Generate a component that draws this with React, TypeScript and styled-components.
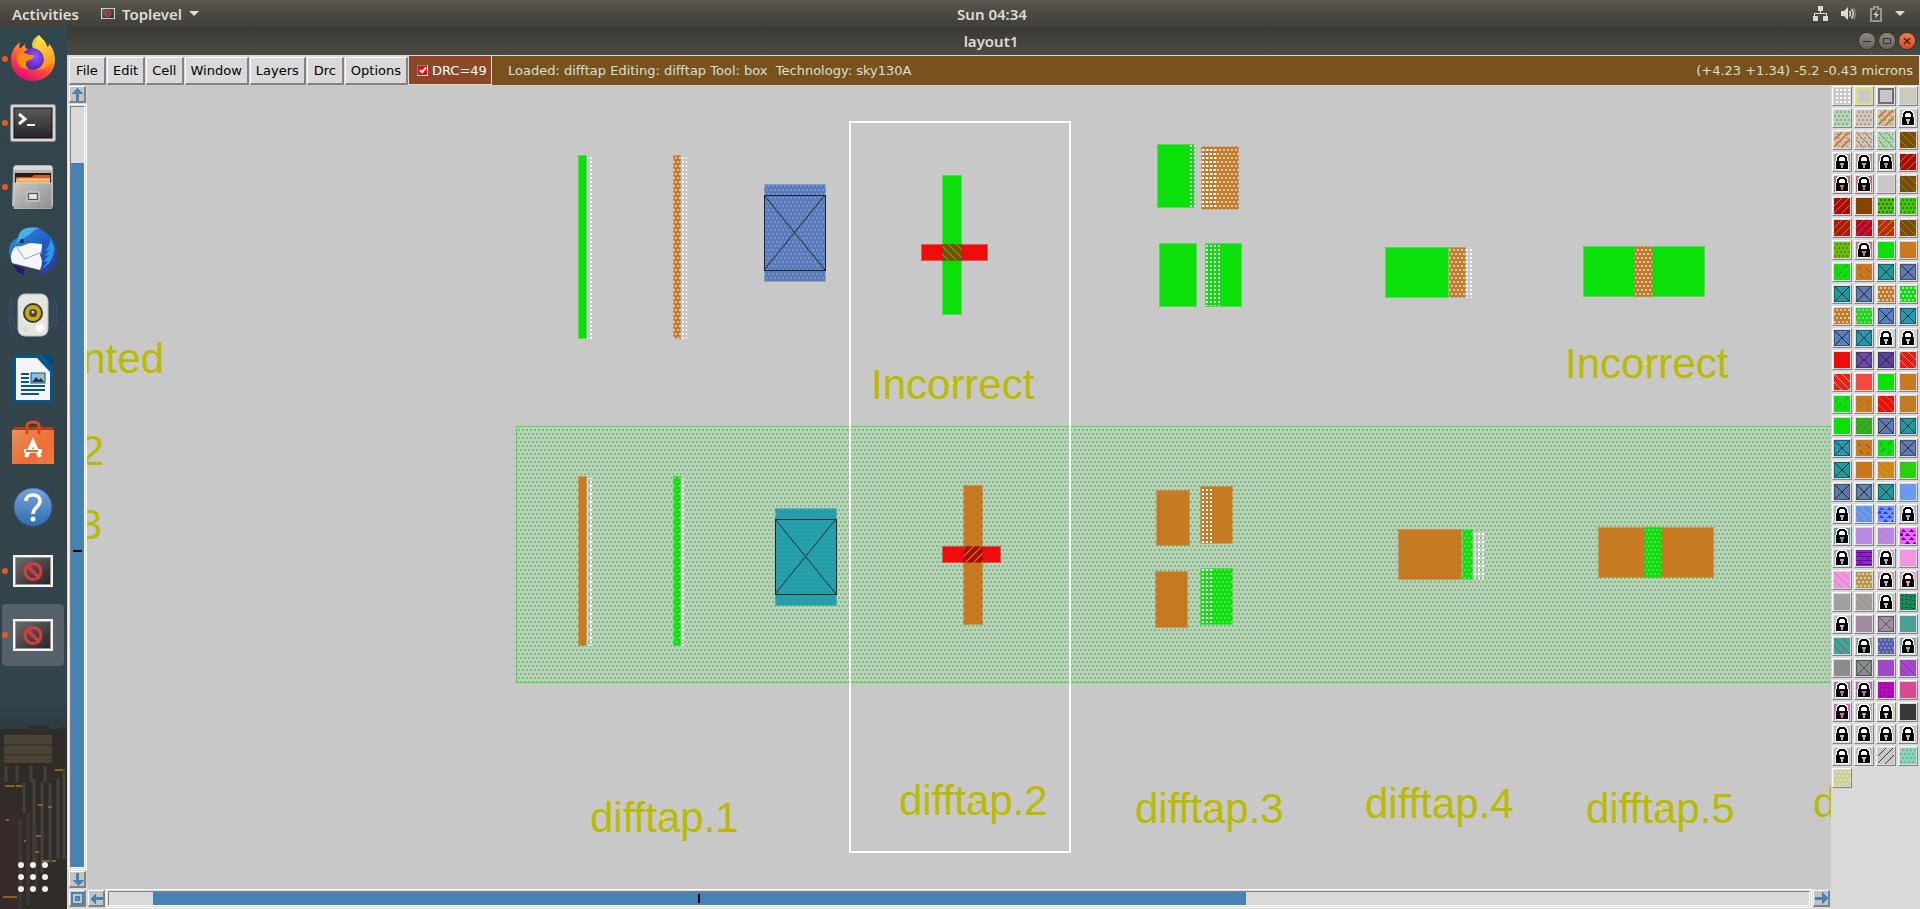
import React from "react";
import styled, { createGlobalStyle, css } from "styled-components";

const Global = createGlobalStyle`
  *, *::before, *::after { box-sizing: border-box; }
  body { margin: 0; background: #d9d9d9; }
  button { margin: 0; padding: 0; border: 0; background: none; font: inherit; color: inherit; cursor: default; }
`;

const raised = css`
  border: 1px solid;
  border-color: #fff #828282 #828282 #fff;
`;

const Desktop = styled.div`
  display: grid;
  grid-template: 27px minmax(0, 1fr) / 67px minmax(0, 1fr);
  height: 100vh;
  overflow: hidden;
  font-family: "DejaVu Sans", sans-serif;
  font-size: 13px;
`;

/* ---------- desktop bar ---------- */

const TopBar = styled.header`
  grid-column: 1 / -1;
  display: grid;
  grid-template-columns: 1fr auto 1fr;
  align-items: center;
  background: linear-gradient(#59564d, #3f3e39);
  color: #dfdbd2;
  font-family: "Noto Sans", sans-serif;
  font-size: 15px;
  line-height: 18px;
  font-weight: 600;
  padding: 0 15px 0 12px;
`;

const BarGroup = styled.div<{ $end?: boolean; $gap: number }>`
  display: flex;
  align-items: center;
  gap: ${(p) => p.$gap}px;
  justify-content: ${(p) => (p.$end ? "flex-end" : "flex-start")};
`;

const BarButton = styled.button`
  display: flex;
  align-items: center;
  gap: 7px;
`;

const Clock = styled.time`
  margin-left: 67px;
`;

/* ---------- dock ---------- */

const Dock = styled.nav`
  position: relative;
  display: flex;
  flex-direction: column;
  gap: 2px;
  padding: 1px 3px 1px 2px;
  overflow: hidden;
  background: linear-gradient(#32464f, #33434a 50%, #32444c 76%, #2c3a42 80%, #2f2e2b 83%, #2f2c29);
`;

const City = styled.svg`
  position: absolute;
  left: 0;
  bottom: 0;
`;

const DockItem = styled.button<{ $active?: boolean; $last?: boolean }>`
  position: relative;
  display: flex;
  align-items: center;
  justify-content: center;
  flex: 0 0 62px;
  border-radius: 4px;
  background: ${(p) => (p.$active ? "#566169" : "transparent")};
  margin-top: ${(p) => (p.$last ? "auto" : 0)};
`;

const RunningDot = styled.span`
  position: absolute;
  left: 0;
  width: 6px;
  height: 6px;
  border-radius: 50%;
  background: #e95420;
`;

/* ---------- window ---------- */

const Window = styled.main`
  display: flex;
  flex-direction: column;
  min-height: 0;
  background: #d9d9d9;
`;

const TitleBar = styled.div`
  display: grid;
  grid-template-columns: 1fr auto 1fr;
  align-items: center;
  flex: 0 0 28px;
  padding-right: 5px;
  background: linear-gradient(#3a3934, #4b4a44);
  color: #dfdbd2;
`;

const Title = styled.h1`
  grid-column: 2;
  margin: 0;
  font: 600 15px/18px "Noto Sans", sans-serif;
`;

const WindowControls = styled.div`
  display: flex;
  justify-content: flex-end;
  gap: 4px;
`;

const WindowControl = styled.button<{ $close?: boolean }>`
  display: flex;
  width: 16px;
  height: 16px;
  border-radius: 50%;
  background: ${(p) => (p.$close ? "linear-gradient(#f47b55, #df4a1c)" : "linear-gradient(#8b8880, #67655e)")};
  box-shadow: 0 0 0 1px #35342f;
`;

const MenuRow = styled.div`
  display: flex;
  flex: 0 0 30px;
  padding: 1px 1px 0;
`;

const MenuBar = styled.nav`
  display: flex;
  gap: 1px;
  padding: 1px 1px 0;
`;

const MenuButton = styled.button`
  ${raised}
  border-right-width: 2px;
  border-bottom-width: 2px;
  min-width: 37px;
  padding: 0 5px;
  line-height: 24px;
  color: #000;
`;

const DrcToggle = styled.label`
  display: flex;
  align-items: center;
  gap: 4px;
  width: 82px;
  margin: 0 1px 1px 0;
  padding: 0 2px 0 8px;
  background: #8b4726;
  color: #fff;
  white-space: nowrap;
`;

const Tick = styled.input`
  appearance: none;
  flex: 0 0 11px;
  height: 11px;
  margin: 0;
  border: 1px solid;
  border-color: #828282 #fff #fff #828282;
  background: #f00;
  position: relative;
  &:checked::after {
    content: "";
    position: absolute;
    left: 3px;
    top: 0;
    width: 4px;
    height: 7px;
    border: solid #fff;
    border-width: 0 2px 2px 0;
    transform: rotate(40deg);
  }
`;

const StatusBar = styled.div`
  display: flex;
  flex: 1;
  align-items: center;
  justify-content: space-between;
  padding: 0 6px 0 16px;
  background: #79511d;
  color: #cfe2d6;
  white-space: pre;
`;

const Body = styled.div`
  display: grid;
  flex: 1;
  min-height: 0;
  grid-template: minmax(0, 1fr) 20px / 20px minmax(0, 1fr) 89px;
`;

const Canvas = styled.svg`
  width: 100%;
  height: 100%;
  background: #c8c8c8;
`;

const ScrollColumn = styled.div`
  display: flex;
  flex-direction: column;
  gap: 1px;
  padding: 1px 0 1px 1px;
`;

const ScrollRow = styled.div`
  grid-row: 2;
  grid-column: 1 / 3;
  display: flex;
  align-items: flex-start;
  gap: 1px;
  padding: 0 1px 0 2px;
`;

const ScrollButton = styled.button`
  ${raised}
  border-bottom-width: 2px;
  border-right-width: 2px;
  flex: none;
  width: 17px;
  height: 17px;
  background: #c3c3c3;
  display: flex;
  align-items: center;
  justify-content: center;
`;

const ColumnButton = styled(ScrollButton)`
  margin-left: 1px;
`;

const RowButton = styled(ScrollButton)`
  margin-top: 1px;
`;

const CornerButton = styled(RowButton)`
  margin-right: 1px;
`;

const Trough = styled.div<{ $vertical?: boolean }>`
  flex: 1;
  display: flex;
  padding: 1px;
  border: 1px solid #fff;
  min-width: 0;
  ${(p) => (p.$vertical ? "width: 19px;" : "height: 19px;")}
`;

const Track = styled.div<{ $vertical?: boolean; $split: string }>`
  flex: 1;
  display: grid;
  border: 1px solid;
  border-color: #828282 #fff #fff #828282;
  ${(p) => (p.$vertical ? `grid-template-rows: ${p.$split};` : `grid-template-columns: ${p.$split};`)}
`;

/* The black notch marks the middle of the cell inside the visible range. */
const Thumb = styled.div<{ $vertical?: boolean }>`
  display: grid;
  justify-items: center;
  align-items: center;
  background: #4682b4;
  ${(p) => (p.$vertical ? "grid-row: 2; grid-template-rows: 388fr 2px 316fr;" : "grid-column: 2;")}
  &::after {
    content: "";
    background: #000;
    ${(p) => (p.$vertical ? "grid-row: 2; width: 9px; height: 2px;" : "width: 2px; height: 9px;")}
  }
`;

const Palette = styled.aside`
  grid-row: 1 / 3;
  grid-column: 3;
  display: grid;
  grid-template-columns: repeat(4, 20px);
  grid-auto-rows: 20px;
  gap: 2px;
  padding: 1px;
  align-content: start;
`;

const LayerButton = styled.button`
  ${raised}
  padding: 1px;
  display: flex;
`;

/* ---------- layer palette data ---------- */

type Kind =
  | "solid" | "dots" | "stag" | "frame" | "back" | "fwd" | "backSparse" | "fwdSparse"
  | "dotsFwd" | "dotsBack" | "x" | "xDots" | "lock" | "tri" | "stripes" | "weave";
type Layer = [Kind, string, string?, string?];

const G = "#0be00b";
const O = "#c67a22";
const B = "#c8c8c8";
const T = "#219a9c";
const S = "#6279ae";

const layers: Layer[] = [
  ["dots", B, "#fff"], ["frame", B, "#dcdc70"], ["frame", B, "#707070"], ["back", B, "#dcdc60"],
  ["stag", B, "#4edc4e"], ["stag", B, "#c89a68"], ["dotsFwd", B, "#cf8232", "#c8a07a"], ["lock", "#c8c8b8"],
  ["dotsFwd", B, "#cf8232", "#c8a07a"], ["dotsBack", B, "#b0764c", "#c89a68"], ["dotsBack", B, G, "#8cc88c"], ["back", "#8b430c", "#10c810"],
  ["lock", "#b5a189"], ["lock", "#b5a189"], ["lock", "#a99680"], ["fwd", "#a50d0d", "#d87020"],
  ["lock", "#c26f78"], ["lock", "#c26f78"], ["solid", B], ["back", "#8b430c", "#10c810"],
  ["fwd", "#a50d0d", "#d87020"], ["solid", "#864300"], ["stag", G, "#f01010"], ["stag", G, "#d83010"],
  ["fwd", "#a81a0c", "#d8701c"], ["fwd", "#b00a26", "#e03c3c"], ["fwd", "#b5300a", "#f0901c"], ["back", "#8b430c", "#30b810"],
  ["stag", "#38d80c", "#f04010"], ["lock", "#b58077"], ["solid", G], ["solid", O],
  ["fwdSparse", G, "#306010"], ["backSparse", O, "#904810"], ["x", T], ["x", S],
  ["x", T], ["x", S], ["stag", O, B], ["stag", G, B],
  ["stag", O, B], ["stag", G, "#c8a8b8"], ["xDots", S, "#4f8df0"], ["xDots", T, "#3990e0"],
  ["xDots", S, "#4f8df0"], ["xDots", T, "#3990e0"], ["lock", "#cfcfcf"], ["lock", "#cfcfcf"],
  ["solid", "#ee0d0d"], ["x", "#7248a6"], ["x", "#64409c"], ["back", "#f81410", "#f0a090"],
  ["back", "#ff1a10", "#f0c0b0"], ["solid", "#f24c40"], ["solid", G], ["solid", O],
  ["fwdSparse", G, "#408010"], ["backSparse", O, "#a85c18"], ["back", "#ee0d0d", "#d86820"], ["solid", O],
  ["solid", G], ["fwd", "#34a81c", "#40c020"], ["x", S], ["x", T],
  ["xDots", T, "#4f8df0"], ["backSparse", O, "#803c00"], ["fwdSparse", G, "#705800"], ["x", S],
  ["x", T], ["solid", "#c8761c"], ["back", "#d08a20", "#c07a10"], ["solid", "#2bd00c"],
  ["x", "#6279a6"], ["x", "#6280a6"], ["x", T], ["solid", "#6a9aee"],
  ["lock", "#a0b8e4"], ["back", "#6a9aee", "#5880c4"], ["tri", "#7890ff", "#1450ff"], ["lock", "#a0b8e4"],
  ["lock", "#5aa3b4"], ["solid", "#b98ae2"], ["back", "#b98ae2", "#c070c8"], ["tri", "#e868f0", "#8800b8"],
  ["lock", "#b8a2c8"], ["stripes", "#8a2cb8", "#6008a0"], ["lock", "#c2aed0"], ["solid", "#f096e2"],
  ["back", "#f096e2", "#d878b8"], ["stag", "#b09080", "#f0e010"], ["lock", "#e49cc8"], ["lock", "#f09cc8"],
  ["solid", "#a0a0a0"], ["back", "#a0a0a0", "#b08858"], ["lock", "#c0c0c0"], ["weave", "#208858", "#005c3c"],
  ["lock", "#c0c0c0"], ["solid", "#a28ca2"], ["x", "#a28ca2", "#6c586c"], ["solid", "#4a9f97"],
  ["back", "#4a9f97", "#388078"], ["lock", "#78b0ac"], ["stag", "#6c50b4", "#38b0a8"], ["lock", "#78b0ac"],
  ["solid", "#8c8c8c"], ["x", "#8c8c8c", "#505050"], ["solid", "#9e4ac8"], ["back", "#9e4ac8", "#a82898"],
  ["lock", "#b070b4"], ["lock", "#b070b4"], ["weave", "#b80cb8", "#8808a0"], ["solid", "#d84a90"],
  ["lock", "#e060cc"], ["lock", "#b8b8b8"], ["lock", "#d0d0b0"], ["solid", "#383838"],
  ["lock", "#c4c4c4"], ["lock", "#c8beb4"], ["lock", "#c8beb4"], ["lock", "#c8beb4"],
  ["lock", "#c8beb4"], ["lock", "#c8beb4"], ["fwd", B, "#404040"], ["stag", "#90d0b8", "#50c898"],
  ["stag", B, "#f0f020"],
];

const dotPath = (staggered: boolean) => {
  let d = "";
  for (let r = 0; r < 4; r++)
    for (let c = 0; c < 4; c++) d += `M${c * 4 + (staggered && r % 2 ? 0 : 2)} ${r * 4 + 1}h2v2h-2z`;
  return d;
};
const straightDots = dotPath(false);
const staggeredDots = dotPath(true);
const fwdLines = "M0 8L8 0M0 15L15 0M7 16L16 7";
const backLines = "M8 0L16 8M0 0L16 16M0 8L8 16";

function Swatch({ layer }: { layer: Layer }) {
  const [kind, bg, fg = "#123040", extra] = layer;
  const line = kind === "dotsFwd" ? 1.8 : 1.3;
  return (
    <svg width="16" height="16" viewBox="0 0 16 16" shapeRendering="crispEdges">
      <rect width="16" height="16" fill={bg} />
      {kind === "dots" && <path d={straightDots} fill={fg} />}
      {kind === "stag" && <path d={staggeredDots} fill={fg} />}
      {kind === "frame" && <rect x="1" y="1" width="14" height="14" fill="none" stroke={fg} strokeWidth="1.500" />}
      {(kind === "dotsFwd" || kind === "dotsBack") && <path d={staggeredDots} fill={extra} />}
      {(kind === "fwd" || kind === "dotsFwd") && <path d={fwdLines} stroke={fg} strokeWidth={line} />}
      {(kind === "back" || kind === "dotsBack") && <path d={backLines} stroke={fg} strokeWidth={line} />}
      {kind === "fwdSparse" && <path d="M3 12l4-4M10 5l4-4M10 13l3-3M1 6l3-3" stroke={fg} />}
      {kind === "backSparse" && <path d="M2 3l3 3M10 4l4 4M3 10l4 4M11 12l2 2" stroke={fg} />}
      {kind === "xDots" && <path d={staggeredDots} fill={fg} />}
      {(kind === "x" || kind === "xDots") && (
        <>
          <rect x=".5" y=".5" width="15" height="15" fill="none" stroke="#123040" strokeOpacity=".5" />
          <path d="M1 1l14 14M15 1L1 15" stroke={kind === "x" ? fg : "#123040"} strokeWidth="1.2" />
        </>
      )}
      {kind === "tri" && (
        <path d="M0 4l3-3 3 3zM8 4l3-3 3 3zM4 8l3-3 3 3zM12 8l3-3 1 3zM0 12l3-3 3 3zM8 12l3-3 3 3zM4 16l3-3 3 3zM12 16l3-3 1 3zM0 5h3v3H0z" fill={fg} />
      )}
      {kind === "stripes" && <path d="M0 2h16v1H0zM0 6h16v1H0zM0 10h16v1H0zM0 14h16v1H0zM3 4h4v1H3zM10 8h4v1h-4zM3 12h4v1H3z" fill={fg} />}
      {kind === "weave" && (
        <path d="M1 1h3v1H1zM6 0h1v3H6zM9 2h3v1H9zM14 1h1v3h-1zM2 4h1v3H2zM5 5h3v1H5zM10 4h1v3h-1zM12 6h3v1h-3zM1 9h3v1H1zM6 8h1v3H6zM9 10h3v1H9zM14 9h1v3h-1zM2 12h1v3H2zM5 13h3v1H5zM10 12h1v3h-1zM12 14h3v1h-3z" fill={fg} />
      )}
      {kind === "lock" && (
        <>
          <path d="M4 0h8l2 3v4h1v9H1V7h1V3z" fill="#fff" />
          <path d="M5 1h6v1h1v1h1v4h1v8H2V7h1V3h1V2h1z" fill="#000" />
          <path d="M6 3h4v1h1v3H5V4h1z" fill="#fff" />
          <path d="M6 9h4v2H9v3H7v-3H6z" fill={bg} />
        </>
      )}
    </svg>
  );
}

/* ---------- chip layout ---------- */

interface BoxProps { x: number; y: number; w: number; h: number; fill: string }

/* A painted area with the softer one pixel rim that every layer has. */
const Box = ({ x, y, w, h, fill }: BoxProps) => (
  <>
    <rect x={x} y={y} width={w} height={h} fill={fill} opacity=".6" />
    <rect x={x + 1} y={y + 1} width={w - 2} height={h - 2} fill={fill} />
  </>
);

const WhiteDots = ({ x, y, w, h }: Omit<BoxProps, "fill">) => (
  <rect x={x} y={y} width={w} height={h} fill="url(#white)" />
);

const Contact = ({ x, y, fill }: { x: number; y: number; fill: string }) => (
  <>
    <Box x={x} y={y} w={62} h={98} fill={fill} />
    <path d={`M${x} ${y + 11}h61v75h-61z`} fill="none" stroke="#16262e" />
    <path d={`M${x} ${y + 11}l61 75m0 -75l-61 75`} fill="none" stroke="#16262e" shapeRendering="auto" />
  </>
);

const Stagger = ({ id, bg, dot, x = 0, y = 0 }: { id: string; bg?: string; dot: string; x?: number; y?: number }) => (
  <pattern id={id} x={x} y={y} width="4" height="8" patternUnits="userSpaceOnUse">
    {bg && <rect width="4" height="8" fill={bg} />}
    <path d="M0 0h2v2H0zM2 4h2v2H2z" fill={dot} />
  </pattern>
);

const Label = styled.text`
  font: 42px "Liberation Sans", sans-serif;
  font-variant-ligatures: none;
  fill: #baba00;
`;

const labels: [string, number, number, boolean?][] = [
  ["Incorrect", 871, 399], ["Incorrect", 1565, 378],
  ["difftap.1", 590, 832], ["difftap.2", 899, 815], ["difftap.3", 1135, 823],
  ["difftap.4", 1365, 818], ["difftap.5", 1586, 823], ["d", 1813, 817],
  ["nted", 164, 373, true], ["2", 104, 465, true], ["3", 102, 539, true],
];

const marks = [[951, 383], [1645, 363], [663, 818], [973, 802], [1208, 809], [1438, 803], [1660, 809]];

function ChipLayout() {
  return (
    <Canvas role="img" aria-label="Layout of cell difftap">
      <defs>
        <Stagger id="nwell" dot="#55da55" y={1} />
        <Stagger id="ptap" bg={O} dot={B} x={1} y={1} />
        <Stagger id="ntap" bg={G} dot="#55dc55" y={1} />
        <Stagger id="pcon" bg={S} dot="#6096f0" y={1} />
        <Stagger id="ncon" bg="#21a0a6" dot="#2f9cb6" y={1} />
        <pattern id="white" x="2" y="1" width="4" height="4" patternUnits="userSpaceOnUse">
          <rect width="2" height="2" fill="#fff" />
        </pattern>
        <pattern id="nfet" width="8" height="8" patternUnits="userSpaceOnUse">
          <rect width="8" height="8" fill="#8b430c" />
          <path d="M-1 -1L9 9M-1 7L1 9M7 -1L9 1" stroke="#10d010" strokeWidth="1.2" />
        </pattern>
        <pattern id="pfet" width="8" height="8" patternUnits="userSpaceOnUse">
          <rect width="8" height="8" fill="#a50d0d" />
          <path d="M-1 9L9 -1M-1 1L1 -1M7 9L9 7" stroke="#d87a20" strokeWidth="1.2" />
        </pattern>
      </defs>
      {/* Shapes use window coordinates; the canvas itself starts at 87, 85. */}
      <g transform="translate(-87 -85)">
        <g shapeRendering="crispEdges">
          <rect x="516" y="426" width="4000" height="257" fill="url(#nwell)" />
          <path d="M4516 426H516v257h4000v-1H517V427h3999z" fill="#48dc48" />

          <Box x={578} y={155} w={9} h={184} fill={G} />
          <WhiteDots x={587} y={155} w={5} h={184} />
          <Box x={673} y={155} w={8} h={184} fill="url(#ptap)" />
          <WhiteDots x={682} y={155} w={5} h={184} />
          <Contact x={764} y={184} fill="url(#pcon)" />

          <Box x={942} y={175} w={20} h={140} fill={G} />
          <Box x={921} y={244} w={67} h={17} fill="#ee0d0d" />
          <Box x={942} y={244} w={20} h={17} fill="url(#nfet)" />

          <Box x={1157} y={144} w={38} h={64} fill={G} />
          <WhiteDots x={1190} y={144} w={5} h={64} />
          <Box x={1201} y={146} w={38} h={64} fill="url(#ptap)" />
          <WhiteDots x={1201} y={147} w={17} h={61} />
          <Box x={1159} y={243} w={38} h={64} fill={G} />
          <Box x={1205} y={243} w={37} h={64} fill={G} />
          <WhiteDots x={1205} y={244} w={15} h={62} />

          <Box x={1385} y={247} w={64} h={51} fill={G} />
          <Box x={1449} y={247} w={17} h={51} fill="url(#ptap)" />
          <WhiteDots x={1466} y={247} w={6} h={51} />
          <Box x={1583} y={246} w={122} h={51} fill={G} />
          <Box x={1634} y={246} w={19} h={51} fill="url(#ptap)" />

          <Box x={578} y={476} w={9} h={170} fill={O} />
          <WhiteDots x={587} y={478} w={5} h={168} />
          <Box x={673} y={476} w={8} h={170} fill="url(#ntap)" />
          <WhiteDots x={682} y={478} w={3} h={168} />
          <Contact x={775} y={508} fill="url(#ncon)" />

          <Box x={963} y={485} w={20} h={140} fill={O} />
          <Box x={942} y={546} w={59} h={17} fill="#ee0d0d" />
          <Box x={963} y={546} w={20} h={17} fill="url(#pfet)" />

          <Box x={1156} y={490} w={34} h={56} fill={O} />
          <Box x={1200} y={486} w={33} h={58} fill={O} />
          <WhiteDots x={1202} y={487} w={11} h={56} />
          <Box x={1155} y={571} w={33} h={57} fill={O} />
          <Box x={1200} y={568} w={33} h={57} fill="url(#ntap)" />
          <WhiteDots x={1202} y={568} w={10} h={56} />

          <Box x={1398} y={529} w={64} h={51} fill={O} />
          <Box x={1462} y={529} w={11} h={51} fill="url(#ntap)" />
          <WhiteDots x={1473} y={531} w={13} h={49} />
          <Box x={1598} y={527} w={116} h={51} fill={O} />
          <Box x={1644} y={527} w={18} h={51} fill="url(#ntap)" />

          <rect x="850" y="122" width="220" height="730" fill="none" stroke="#fff" strokeWidth="2" />
        </g>
        {labels.map(([text, x, y, end]) => (
          <Label key={text + x} x={x} y={y} textAnchor={end ? "end" : "start"}>{text}</Label>
        ))}
        {marks.map(([x, y]) => (
          <path key={x} d={`M${x - 2} ${y}h5v1h-5zM${x} ${y - 2}h1v5h-1z`} fill="#f0f020" shapeRendering="crispEdges" />
        ))}
      </g>
    </Canvas>
  );
}

/* ---------- icons ---------- */

const Caret = () => (
  <svg width="10" height="6" viewBox="0 0 10 6"><path d="M0 0h10L5 5z" fill="#dfdbd2" /></svg>
);

const arrowPath = "M6 0L12 6H8v7H5V6H0z";
const Arrow = ({ turn }: { turn: number }) => (
  <svg width="13" height="13" viewBox="0 0 13 13" shapeRendering="crispEdges">
    <path d={arrowPath} fill="#4682b4" transform={`rotate(${turn} 6.5 6.5)`} />
  </svg>
);

const FirefoxIcon = () => (
  <svg width="46" height="50" viewBox="0 0 46 50">
    <defs>
      <linearGradient id="ff1" x1=".8" y1="0" x2=".3" y2="1">
        <stop offset="0" stopColor="#fff044" /><stop offset=".35" stopColor="#ffa81e" />
        <stop offset=".65" stopColor="#ff4a38" /><stop offset="1" stopColor="#e2067c" />
      </linearGradient>
      <radialGradient id="ff2" cx=".6" cy=".4"><stop offset="0" stopColor="#9059ff" /><stop offset="1" stopColor="#5b2bc0" /></radialGradient>
      <linearGradient id="ff3" x1="0" y1="0" x2=".4" y2="1"><stop offset="0" stopColor="#fff850" /><stop offset="1" stopColor="#ff9a1c" /></linearGradient>
    </defs>
    <path d="M10 8C9 11 9 13 10 15l5-5c0 3 0 4 2 5h7L29 1c3 4 7 6 8 12 2-1 2-1 2-3 4 5 6 11 6 16 0 12-10 21-22 21S1 38 1 26c0-7 2-12 9-18z" fill="url(#ff1)" />
    <circle cx="23" cy="25" r="11" fill="url(#ff2)" />
    <path d="M29 1c-7 4-8 10-6 13 7 1 11 6 11 12-1 6-5 9-9 10 9 1 19-6 19-16 0-4-3-8-5-10 0 2 0 2-2 3C36 7 32 5 29 1z" fill="url(#ff3)" opacity=".85" />
    <path d="M7 21c5-3 9-2 12 0 4 0 6 0 5 2s-5 3-7 4c-2 3-1 6 2 8C11 36 5 29 7 21z" fill="#ff8a16" />
  </svg>
);

const TerminalIcon = () => (
  <svg width="46" height="38" viewBox="0 0 46 38">
    <defs>
      <linearGradient id="tm" x1="0" y1="0" x2="0" y2="1"><stop offset="0" stopColor="#5a5a5a" /><stop offset="1" stopColor="#262626" /></linearGradient>
    </defs>
    <rect x=".5" y=".5" width="45" height="37" rx="2" fill="#d4d4d4" stroke="#8e8e8e" />
    <rect x="4" y="4" width="38" height="30" fill="url(#tm)" stroke="#111" />
    <path d="M9 10l6 5-6 5" fill="none" stroke="#f2f2f2" strokeWidth="3" /><path d="M17 21h8" stroke="#f2f2f2" strokeWidth="2" />
  </svg>
);

const FilesIcon = () => (
  <svg width="42" height="44" viewBox="0 0 42 44">
    <defs>
      <linearGradient id="fl" x1="0" y1="0" x2="1" y2="1"><stop offset="0" stopColor="#c8c8c8" /><stop offset="1" stopColor="#8d8d8d" /></linearGradient>
    </defs>
    <path d="M1 3q1-3 3-3h34q2 0 3 3v38H0z" fill="#b4b4b4" /><path d="M2 1h38v4H2z" fill="#d8d8d8" />
    <rect x="3" y="8" width="36" height="12" fill="#2a1a10" />
    <path d="M4 12h16l2-2h16v9H4z" fill="#d9581c" /><path d="M4 14h34v5H4z" fill="#f2b060" /><path d="M6 14h32" stroke="#fff3dc" />
    <rect x="2" y="18" width="38" height="26" rx="1" fill="url(#fl)" stroke="#dcdcdc" strokeWidth=".6" />
    <rect x="14" y="26" width="14" height="11" rx="3" fill="#c2c2c2" /><rect x="16.500" y="28.500" width="9" height="6" fill="#e6e6e6" stroke="#555" strokeWidth="1.2" />
  </svg>
);

const ThunderbirdIcon = () => (
  <svg width="50" height="48" viewBox="0 0 50 48">
    <defs>
      <linearGradient id="tb" x1="0" y1="0" x2="1" y2="1"><stop offset="0" stopColor="#2f97dc" /><stop offset=".5" stopColor="#1f5fc4" /><stop offset="1" stopColor="#33309a" /></linearGradient>
    </defs>
    <path d="M18 1c6-1 17 0 24 8 8 9 9 22 3 31-4 5-9 8-16 8 4-3 5-6 5-9L6 38C0 30 0 22 3 16c3-4 6-4 8-7 1-4 4-7 7-8z" fill="url(#tb)" />
    <path d="M20 1c-7 1-10 6-10 11l-4 7c6-8 14-9 18-14 3-3 6-4 10-3C31 1 25 0 20 1z" fill="#48b1e8" />
    <path d="M42 10c1 6-2 11-5 14l5-1-6 6 5-1-6 7 5-1-6 8c8-4 13-14 12-22z" fill="#2a9be0" />
    <path d="M8 19c5 2 9-2 14-3l12 1c0 6-1 8-2 11 2 4 3 8 0 15L4 36C2 30 3 24 8 19z" fill="#f6f6f8" />
    <path d="M8 19l9 13 17-7" fill="none" stroke="#9aa0ac" /><path d="M5 37l12 5c-2 3-2 4 0 6-6-1-10-5-12-11z" fill="#2c1470" />
    <circle cx="14" cy="14" r="2" fill="#123" />
  </svg>
);

const SpeakerIcon = () => (
  <svg width="48" height="46" viewBox="0 0 48 46">
    <path d="M7 8q-8 14 0 29M3 6q-6 17 0 33M41 8q8 14 0 29M45 6q6 17 0 33" fill="none" stroke="#38567c" />
    <rect x="9" y="2" width="30" height="42" rx="7" fill="#e4e4e2" stroke="#bdbdbb" />
    <circle cx="24" cy="21" r="10" fill="#3b3b34" /><circle cx="24" cy="21" r="8" fill="#cda812" /><circle cx="24" cy="21" r="4" fill="#45453e" /><circle cx="24" cy="20" r="1.500" fill="#c9d0d8" />
    <circle cx="31" cy="36" r="4" fill="#fff" /><circle cx="16" cy="37" r="2" fill="none" stroke="#cfcfcd" />
  </svg>
);

const WriterIcon = () => (
  <svg width="40" height="48" viewBox="0 0 40 48">
    <rect width="40" height="48" rx="3" fill="#06568c" /><path d="M27 0h13v13z" fill="#0a76b8" />
    <path d="M3 3h21l13 14v28H3z" fill="#f4f4f4" /><path d="M28 0l12 13V0z" fill="#044a7a" />
    <path d="M8 19h8M8 23h8M8 27h8M8 31h24M8 35h24M8 39h18" stroke="#06568c" strokeWidth="2" />
    <rect x="18" y="18" width="14" height="10" fill="#7cc4ee" stroke="#06568c" /><path d="M19 27l4-5 3 3 2-2 3 4z" fill="#333" /><circle cx="29.500" cy="20.500" r="1.500" fill="#f2b632" />
  </svg>
);

const SoftwareIcon = () => (
  <svg width="42" height="46" viewBox="0 0 42 46">
    <defs>
      <linearGradient id="sw" x1="0" y1="0" x2="1" y2="1"><stop offset="0" stopColor="#e8905a" /><stop offset=".6" stopColor="#ef6c35" /><stop offset="1" stopColor="#ef7a45" /></linearGradient>
    </defs>
    <path d="M2 7h38l2 4H0z" fill="#b43c12" /><rect y="10" width="42" height="34" fill="url(#sw)" />
    <path d="M15 14V6q0-4 6-4t6 4v8" fill="none" stroke="#d64c20" strokeWidth="3" />
    <path d="M14 37l7-15 7 15" fill="none" stroke="#fff" strokeWidth="4" /><path d="M12 31h18" stroke="#fff" strokeWidth="4" /><path d="M14 31h12" stroke="#f07022" strokeWidth="2" />
  </svg>
);

const HelpIcon = () => (
  <svg width="40" height="40" viewBox="0 0 40 40">
    <defs>
      <linearGradient id="hp" x1="0" y1="0" x2="0" y2="1"><stop offset="0" stopColor="#7aa2de" /><stop offset="1" stopColor="#2f6fae" /></linearGradient>
    </defs>
    <circle cx="20" cy="20" r="19" fill="url(#hp)" stroke="#2b5f98" />
    <path d="M13 14c0-8 14-8 14 0 0 6-7 6-7 13" fill="none" stroke="#fff" strokeWidth="3.500" /><circle cx="20" cy="32" r="2.500" fill="#fff" />
  </svg>
);

const AppIcon = ({ width = 40, height = 32, id }: { width?: number; height?: number; id: string }) => (
  <svg width={width} height={height} viewBox="0 0 40 32">
    <defs>
      <linearGradient id={id} x1="0" y1="0" x2="1" y2="1"><stop offset="0" stopColor="#6a6a6a" /><stop offset="1" stopColor="#262626" /></linearGradient>
    </defs>
    <rect width="40" height="32" fill="#f4f4f4" /><rect x="2.500" y="2.500" width="35" height="27" fill={`url(#${id})`} stroke="#999" />
    <circle cx="20" cy="16.500" r="8" fill="none" stroke="#d83a3e" strokeWidth="3.200" /><path d="M14.500 11l11 11" stroke="#d83a3e" strokeWidth="3.200" />
  </svg>
);

const GridIcon = () => (
  <svg width="30" height="30" viewBox="0 0 30 30" fill="#f0f0f0">
    {[3, 15, 27].map((x) => [3, 15, 27].map((y) => <circle key={`${x}-${y}`} cx={x} cy={y} r="3" />))}
  </svg>
);

const windowsLit = [[5, 86, 10], [16, 86, 6], [55, 70, 8], [38, 105, 5], [48, 107, 4], [6, 120, 3], [24, 141, 2], [36, 136, 5], [35, 152, 4], [42, 161, 7], [52, 161, 4], [3, 197, 14], [43, 177, 4]];

const dockApps: { name: string; icon: React.ReactNode; running?: boolean; active?: boolean }[] = [
  { name: "Firefox", icon: <FirefoxIcon />, running: true },
  { name: "Terminal", icon: <TerminalIcon />, running: true },
  { name: "Files", icon: <FilesIcon />, running: true },
  { name: "Thunderbird", icon: <ThunderbirdIcon /> },
  { name: "Rhythmbox", icon: <SpeakerIcon /> },
  { name: "LibreOffice Writer", icon: <WriterIcon /> },
  { name: "Ubuntu Software", icon: <SoftwareIcon /> },
  { name: "Help", icon: <HelpIcon /> },
  { name: "Toplevel", icon: <AppIcon id="appA" />, running: true },
  { name: "Toplevel window", icon: <AppIcon id="appB" />, running: true, active: true },
];

const menus = ["File", "Edit", "Cell", "Window", "Layers", "Drc", "Options"];

export default function App() {
  return (
    <Desktop>
      <Global />
      <TopBar>
        <BarGroup $gap={22}>
          <BarButton>Activities</BarButton>
          <BarButton><AppIcon id="appC" width={14} height={11} />Toplevel<Caret /></BarButton>
        </BarGroup>
        <Clock>Sun 04:34</Clock>
        <BarGroup $gap={13} $end>
          <svg width="15" height="15" viewBox="0 0 15 15" fill="#dfdbd2">
            <path d="M5 0h5v5H8v2h6v3h1v5h-5v-5h3V8H2v2h3v5H0v-5h1V7h6V5H5z" />
          </svg>
          <svg width="16" height="14" viewBox="0 0 16 14">
            <path d="M0 4h3l4-4v13L3 9H0z" fill="#dfdbd2" />
            <path d="M8.500 4q2 2.500 0 5.500M10.500 2q3.500 4.500 0 9.500" fill="none" stroke="#dfdbd2" strokeWidth="1.500" />
            <path d="M12.500 1q4 5.500 0 11.500" fill="none" stroke="#85827a" strokeWidth="1.500" />
          </svg>
          <svg width="12" height="16" viewBox="0 0 12 16">
            <path d="M4 1h4v2h3v12H1V3h3z" fill="none" stroke="#98958d" strokeWidth="2" />
            <path d="M8 4L3 9h3l-1 4 4-5H6z" fill="#dfdbd2" />
          </svg>
          <Caret />
        </BarGroup>
      </TopBar>

      <Dock aria-label="Dock">
        <City width="67" height="184" viewBox="0 6 67 184" aria-hidden="true">
          <path d="M0 10h27V7h22v3h14v-2h4v182H0z" fill="#302d28" />
          <path d="M4 16h48v28H4z" fill="#4b4334" /><path d="M4 26h48M4 36h48" stroke="#302d28" />
          <path d="M6 47v16M17 47v16M31 47v16M45 47v16M24 64v30M34 60v90M42 64v90M50 64v80M58 60v80M64 50v90" stroke="#45403a" strokeWidth="3" />
          <path d="M0 82h16v108H0z" fill="#38292a" /><path d="M20 100v90M28 96v90M36 110v60" stroke="#3c3834" strokeWidth="3" />
          {windowsLit.map(([x, y, w]) => <rect key={`${x}-${y}`} x={x} y={y - 20} width={w} height="2" fill="#8a6224" />)}
        </City>
        {dockApps.map((app) => (
          <DockItem key={app.name} aria-label={app.name} $active={app.active}>
            {app.running && <RunningDot />}
            {app.icon}
          </DockItem>
        ))}
        <DockItem aria-label="Show applications" $last><GridIcon /></DockItem>
      </Dock>

      <Window>
        <TitleBar>
          <Title>layout1</Title>
          <WindowControls>
            <WindowControl aria-label="Minimize">
              <svg width="16" height="16"><path d="M4 8h8v1H4z" fill="#35342f" /></svg>
            </WindowControl>
            <WindowControl aria-label="Maximize">
              <svg width="16" height="16"><path d="M4.500 5.500h7v5h-7z" fill="none" stroke="#35342f" /></svg>
            </WindowControl>
            <WindowControl aria-label="Close" $close>
              <svg width="16" height="16"><path d="M5 5l6 6M11 5l-6 6" stroke="#402010" strokeWidth="1.500" /></svg>
            </WindowControl>
          </WindowControls>
        </TitleBar>

        <MenuRow>
          <MenuBar>
            {menus.map((m) => <MenuButton key={m}>{m}</MenuButton>)}
          </MenuBar>
          <DrcToggle><Tick type="checkbox" defaultChecked />DRC=49</DrcToggle>
          <StatusBar>
            <span>Loaded: difftap Editing: difftap Tool: box  Technology: sky130A</span>
            <span>(+4.23 +1.34) -5.2 -0.43 microns</span>
          </StatusBar>
        </MenuRow>

        <Body>
          <ScrollColumn>
            <ColumnButton aria-label="Scroll up"><Arrow turn={0} /></ColumnButton>
            <Trough $vertical>
              <Track $vertical $split="56fr 706fr"><Thumb $vertical /></Track>
            </Trough>
            <ColumnButton aria-label="Scroll down"><Arrow turn={180} /></ColumnButton>
          </ScrollColumn>
          <ChipLayout />
          <ScrollRow>
            <CornerButton aria-label="Fit view">
              <svg width="13" height="13" shapeRendering="crispEdges">
                <path d="M1 1h11v11H1zM5 5h3v3H5z" fill="none" stroke="#4682b4" strokeWidth="2" />
              </svg>
            </CornerButton>
            <RowButton aria-label="Scroll left"><Arrow turn={-90} /></RowButton>
            <Trough>
              <Track $split="44fr 1094fr 564fr"><Thumb /></Track>
            </Trough>
            <RowButton aria-label="Scroll right"><Arrow turn={90} /></RowButton>
          </ScrollRow>
          <Palette aria-label="Layers">
            {layers.map((layer, i) => (
              <LayerButton key={i} aria-label={`Layer ${i + 1}`}><Swatch layer={layer} /></LayerButton>
            ))}
          </Palette>
        </Body>
      </Window>
    </Desktop>
  );
}
